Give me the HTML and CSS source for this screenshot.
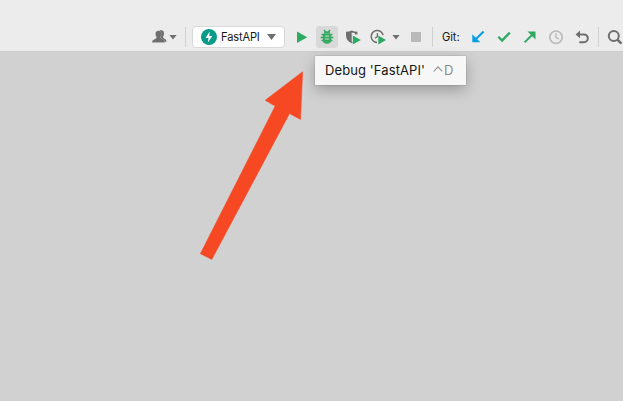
FILE: index.html
```html
<!DOCTYPE html>
<html lang="en">
<head>
<meta charset="utf-8">
<title>FastAPI</title>
<link rel="stylesheet" href="styles.css">
</head>
<body>
<header class="toolbar">
  <div class="account">
    <svg width="17" height="16" viewBox="0 0 17 16" fill="#6e6e6e"><path d="M8.5 1.8c2.7-1.2 4.5.2 4.5 2.6 0 1.8-1 2.7-1 3.8 0 1.3 3.5 1.2 3.5 4.5h-2.8c-.3-2.1-2.5-2.5-3-3.3z"/><path stroke="#c4c4c4" stroke-width=".3" d="M7.4 1.7C5.4 1.7 4.4 3 4.5 5c0 1.6.8 2.3 1.1 3.4-.2 1.8-4.6 1.5-4.6 5.2h12.8c0-3.9-4-3.4-4.4-5.2.5-1.1 1-1.8 1.1-3.4.1-2-1.1-3.3-3.1-3.3z"/></svg>
    <i class="caret"></i>
  </div>
  <i class="separator"></i>
  <div class="run-config">
    <svg width="16" height="16" viewBox="0 0 16 16"><circle cx="8" cy="8" r="8" fill="#099b8a"/><path d="M8.7 2.6 4.5 9h3l-.6 4.4L11.3 7H8.2z" fill="#fff"/></svg>
    <span class="config-name">FastAPI</span>
    <i class="caret large"></i>
  </div>
  <div class="run-actions">
    <button class="tool"><svg width="16" height="16" viewBox="0 0 16 16"><path d="M3 2.4 13.2 8.2 3 14z" fill="#2eaa60"/></svg></button>
    <button class="tool active"><svg width="16" height="16" viewBox="0 0 16 16"><g fill="none" stroke="#35ab62" stroke-width="1.5"><path d="m5 1 1.6 2.2M11 1 9.4 3.2M2.5 5.5H5m6 0h2.5M1.6 8.5h12.8M2.5 11.6H5m6 0h2.5"/></g><path d="M4.8 4.7a3.2 2.4 0 0 1 6.4 0zM3.8 5h8.4v5.7a4.2 4 0 0 1-8.4 0z" fill="#35ab62"/><path d="M6 7.1h4M6 10h4" stroke="#d0ded5" stroke-width="1"/></svg></button>
    <button class="tool"><svg width="16" height="16" viewBox="0 0 16 16"><path d="M1 2.8Q4 2.7 6.7 1.4 9.5 2.7 12.4 2.8V5.6H10V4.2L6.7 3.5v9l1 1.1-1 .7C2.7 12.5 1 9.7 1 6.2z" fill="#6e6e6e"/><path d="M7.8 6.4 15.8 11 7.8 15.6z" fill="#2eaa60"/></svg></button>
    <button class="tool profile"><svg width="16" height="16" viewBox="0 0 16 16"><path d="M7 13.4A6 6 0 1 1 13.1 6.2" fill="none" stroke="#6e6e6e" stroke-width="1.5"/><path d="M7.4 4v3.6L5 9.2" fill="none" stroke="#6e6e6e" stroke-width="1.3"/><path d="M8.3 6.4 16 10.9l-7.7 4.5z" fill="#2eaa60"/></svg></button>
    <i class="caret"></i>
    <i class="stop"></i>
  </div>
  <i class="separator"></i>
  <div class="git">
    <span class="git-label">Git:</span>
    <svg width="16" height="16" viewBox="0 0 16 16"><path d="M13.6 2.5 5 11" stroke="#079fe3" stroke-width="2.1"/><path d="M2.3 5.3v8h8z" fill="#079fe3"/></svg>
    <svg width="16" height="16" viewBox="0 0 16 16"><path d="m2.3 7.8 3.8 3.8 7.7-8" fill="none" stroke="#2eaa60" stroke-width="2.3"/></svg>
    <svg width="16" height="16" viewBox="0 0 16 16"><path d="m2.6 13.4 8.4-8.4" stroke="#2eaa60" stroke-width="2"/><path d="M5.5 2.5h8v8z" fill="#2eaa60"/></svg>
    <svg width="16" height="16" viewBox="0 0 16 16" fill="none" stroke="#bababa"><circle cx="8" cy="8.2" r="6.2" stroke-width="1.6"/><path d="M8 4.2v4.4l2.8 1.5" stroke-width="1.4"/></svg>
    <svg width="16" height="16" viewBox="0 0 16 16"><path d="M4.3 5.4h5.6a3.9 3.9 0 0 1 0 7.8H5.3" fill="none" stroke="#6e6e6e" stroke-width="2"/><path d="M6 1.5v7.8L1.6 5.4z" fill="#6e6e6e"/></svg>
  </div>
  <i class="separator"></i>
  <svg class="search" width="16" height="16" viewBox="0 0 16 16" fill="none" stroke="#6e6e6e"><circle cx="6.8" cy="7" r="5" stroke-width="2"/><path d="m10.4 10.6 4 4" stroke-width="2.4"/></svg>
</header>
<main class="workspace">
  <svg class="pointer" width="103" height="189" viewBox="200 71 103 189"><path d="M302.6 71.8 265.2 100.3l10 5.8-74.8 147.6 11.4 5.7 77.7-145.9 11 5.9z" fill="#f54823" stroke="#f54823" stroke-width=".6" stroke-linejoin="round"/></svg>
  <div class="tooltip"><span>Debug 'FastAPI'</span><kbd><svg width="10" height="6" viewBox="0 0 10 6"><path d="M.7 5.5 5 .8l4.3 4.7" fill="none" stroke="#8c8c8c" stroke-width="1.1"/></svg>D</kbd></div>
</main>
</body>
</html>
```
FILE: styles.css
```css
* { box-sizing: border-box; }
body {
  margin: 0;
  height: 401px;
  overflow: hidden;
  position: relative;
  background: #d1d1d1;
  color: #161616;
  font-family: Inter, "Liberation Sans", sans-serif;
}
svg { display: block; flex: none; }
.toolbar {
  display: flex;
  align-items: center;
  height: 52px;
  padding: 23px 0 0 151px;
  background: #ececec;
  border-bottom: 1px solid #cecece;
}
.account { display: flex; flex: none; align-items: center; gap: 1px; width: 34px; }
.caret {
  flex: none;
  width: 8px;
  height: 5px;
  background: #6e6e6e;
  clip-path: polygon(0 0, 100% 0, 50% 100%);
}
.caret.large { width: 9px; height: 6px; }
.separator { flex: none; width: 1px; height: 20px; background: #d0d0d0; }
.run-config {
  display: flex;
  flex: none;
  align-items: center;
  width: 93px;
  height: 22px;
  margin-left: 6px;
  padding: 0 8px;
  border: 1px solid #d8d8d8;
  border-radius: 4px;
  background: #fff;
}
.config-name { width: 39px; margin: 0 7px 0 4px; font-size: 11.1px; letter-spacing: -.15px; white-space: nowrap; }
.run-actions { display: flex; flex: none; align-items: center; width: 147px; padding-left: 6px; }
.tool {
  display: grid;
  place-items: center;
  flex: none;
  width: 22px;
  height: 22px;
  margin-right: 3px;
  padding: 0;
  border: 0;
  border-radius: 3px;
  background: none;
}
.tool.active { margin-right: 4px; background: #d9d9d9; }
.stop { width: 10px; height: 10px; margin-left: 11px; background: #bababa; }
.git { display: flex; flex: none; align-items: center; gap: 10px; width: 165px; padding-left: 9px; }
.git-label { width: 18px; font-size: 11.2px; letter-spacing: -.1px; white-space: nowrap; }
.search { margin-left: 8px; }
.pointer { position: absolute; left: 200px; top: 71px; }
.tooltip {
  position: absolute;
  left: 315px;
  top: 56px;
  display: flex;
  align-items: center;
  width: 151px;
  height: 29px;
  padding: 0 0 0 10px;
  background: #f7f7f7;
  box-shadow: 0 0 1px #0006, 0 5px 14px #0004;
  font-size: 13px;
  letter-spacing: .1px;
  line-height: 15px;
  white-space: nowrap;
}
.tooltip span { width: 101px; }
.tooltip kbd { display: flex; align-items: center; gap: 1px; margin-left: 7px; color: #8c8c8c; font-family: inherit; font-size: 13px; }
.tooltip kbd svg { margin-top: -4px; }
```
